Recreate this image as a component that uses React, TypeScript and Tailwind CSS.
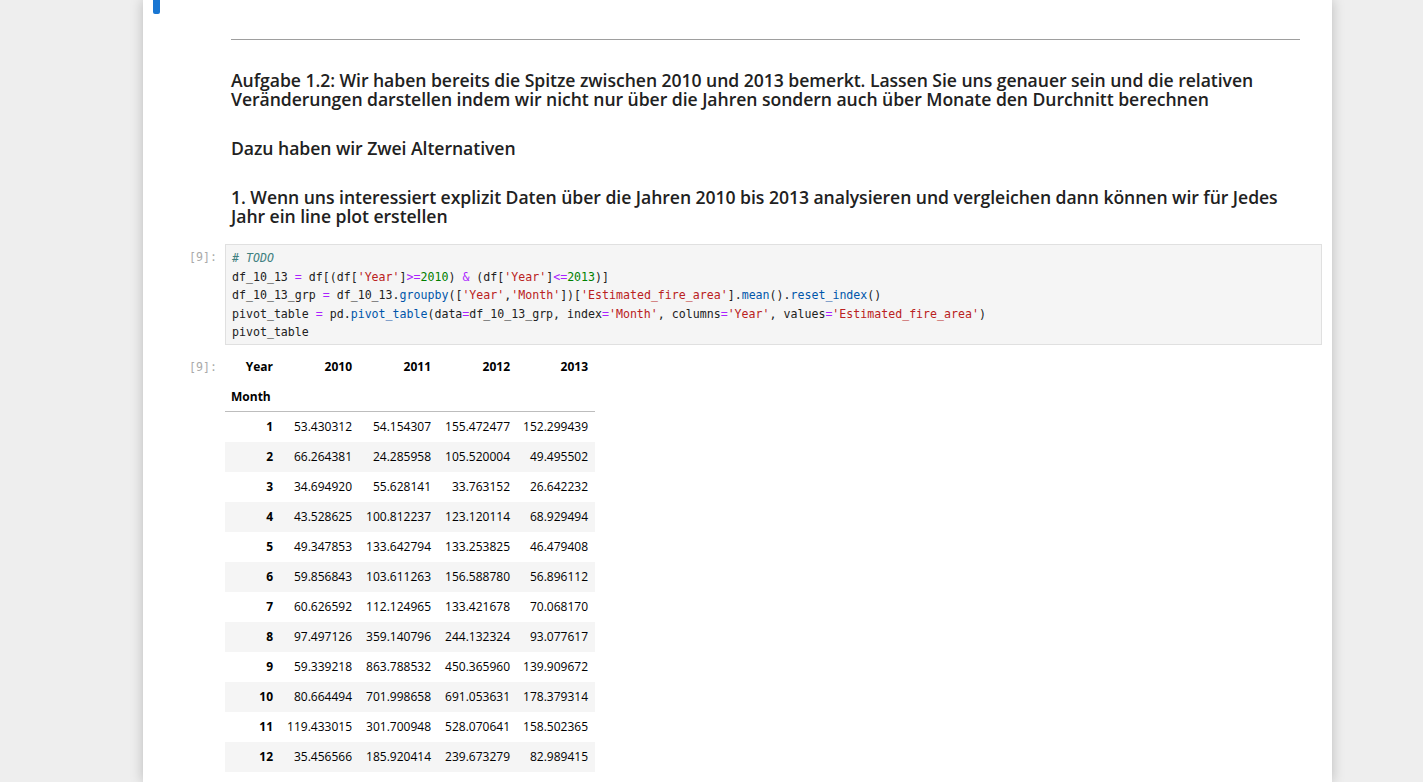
import React from "react";

const rows: [number, string, string, string, string][] = [
  [1, "53.430312", "54.154307", "155.472477", "152.299439"],
  [2, "66.264381", "24.285958", "105.520004", "49.495502"],
  [3, "34.694920", "55.628141", "33.763152", "26.642232"],
  [4, "43.528625", "100.812237", "123.120114", "68.929494"],
  [5, "49.347853", "133.642794", "133.253825", "46.479408"],
  [6, "59.856843", "103.611263", "156.588780", "56.896112"],
  [7, "60.626592", "112.124965", "133.421678", "70.068170"],
  [8, "97.497126", "359.140796", "244.132324", "93.077617"],
  [9, "59.339218", "863.788532", "450.365960", "139.909672"],
  [10, "80.664494", "701.998658", "691.053631", "178.379314"],
  [11, "119.433015", "301.700948", "528.070641", "158.502365"],
  [12, "35.456566", "185.920414", "239.673279", "82.989415"],
];

const mono = "font-['DejaVu_Sans_Mono',monospace]";

function Op({ children }: { children: React.ReactNode }) {
  return <span className="text-[#aa22ff]">{children}</span>;
}
function Str({ children }: { children: React.ReactNode }) {
  return <span className="text-[#ba2121]">{children}</span>;
}
function Num({ children }: { children: React.ReactNode }) {
  return <span className="text-[#008000]">{children}</span>;
}
function Prop({ children }: { children: React.ReactNode }) {
  return <span className="text-[#0055aa]">{children}</span>;
}

export default function App() {
  return (
    <div className="min-h-[782px] h-[782px] overflow-hidden bg-[#eeeeee] font-['Open_Sans',sans-serif] text-[#212121]">
      <div className="relative ml-[143px] w-[1189px] h-full bg-white shadow-[0_0_12px_rgba(0,0,0,0.22)]">
        <div className="absolute left-[10px] top-0 w-[7px] h-[14px] bg-[#1976d2] rounded-b-[2px]" />

        <div className="pl-[88px] pr-[32px] pt-[39px]">
          <div className="h-px bg-[#9e9e9e]" />

          <div className="mt-[31px] text-[17.6px] font-semibold leading-[19px] whitespace-nowrap tracking-[-0.05px]">
            <p>
              Aufgabe 1.2: Wir haben bereits die Spitze zwischen 2010 und 2013 bemerkt. Lassen Sie uns genauer sein und die relativen
              <br />
              Veränderungen darstellen indem wir nicht nur über die Jahren sondern auch über Monate den Durchnitt berechnen
            </p>
            <p className="mt-[30px]">Dazu haben wir Zwei Alternativen</p>
            <p className="mt-[30px]">
              1. Wenn uns interessiert explizit Daten über die Jahren 2010 bis 2013 analysieren und vergleichen dann können wir für Jedes
              <br />
              Jahr ein line plot erstellen
            </p>
          </div>
        </div>

        {/* code cell */}
        <div className="flex mt-[18px]">
          <div className={`w-[82px] shrink-0 text-right pr-[8px] pt-[4px] text-[11.6px] leading-[18.6px] text-[#aaaaaa] ${mono}`}>
            [9]:
          </div>
          <div className={`w-[1097px] border border-[#e0e0e0] bg-[#f5f5f5] px-[6px] pt-[4px] pb-[2px] text-[11.6px] leading-[18.6px] text-[#212121] ${mono} whitespace-pre`}>
            <div className="italic text-[#408080]"># TODO</div>
            <div>
              df_10_13 <Op>=</Op> df[(df[<Str>'Year'</Str>]<Op>&gt;=</Op><Num>2010</Num>) <Op>&amp;</Op> (df[<Str>'Year'</Str>]<Op>&lt;=</Op><Num>2013</Num>)]
            </div>
            <div>
              df_10_13_grp <Op>=</Op> df_10_13.<Prop>groupby</Prop>([<Str>'Year'</Str>,<Str>'Month'</Str>])[<Str>'Estimated_fire_area'</Str>].<Prop>mean</Prop>().<Prop>reset_index</Prop>()
            </div>
            <div>
              pivot_table <Op>=</Op> pd.<Prop>pivot_table</Prop>(data<Op>=</Op>df_10_13_grp, index<Op>=</Op><Str>'Month'</Str>, columns<Op>=</Op><Str>'Year'</Str>, values<Op>=</Op><Str>'Estimated_fire_area'</Str>)
            </div>
            <div>pivot_table</div>
          </div>
        </div>

        {/* output */}
        <div className="flex mt-[7px]">
          <div className={`w-[82px] shrink-0 text-right pr-[8px] pt-[6px] text-[11.6px] leading-[18.6px] text-[#aaaaaa] ${mono}`}>
            [9]:
          </div>
          <table className="border-collapse text-[12px] text-black">
            <thead>
              <tr className="h-[30px] font-bold">
                <th className="w-[54px] text-right pr-[6px]">Year</th>
                <th className="w-[79px] text-right pr-[6px]">2010</th>
                <th className="w-[79px] text-right pr-[6px]">2011</th>
                <th className="w-[79px] text-right pr-[6px]">2012</th>
                <th className="w-[79px] text-right pr-[7px]">2013</th>
              </tr>
              <tr className="h-[30px] font-bold border-b border-[#bdbdbd]">
                <th className="text-left pl-[6px]">Month</th>
                <th />
                <th />
                <th />
                <th />
              </tr>
            </thead>
            <tbody>
              {rows.map((r, i) => (
                <tr key={r[0]} className={`h-[30px] ${i % 2 === 1 ? "bg-[#f5f5f5]" : ""}`}>
                  <th className="text-right pr-[6px] font-bold">{r[0]}</th>
                  <td className="text-right pr-[6px]">{r[1]}</td>
                  <td className="text-right pr-[6px]">{r[2]}</td>
                  <td className="text-right pr-[6px]">{r[3]}</td>
                  <td className="text-right pr-[7px]">{r[4]}</td>
                </tr>
              ))}
            </tbody>
          </table>
        </div>
      </div>
    </div>
  );
}
